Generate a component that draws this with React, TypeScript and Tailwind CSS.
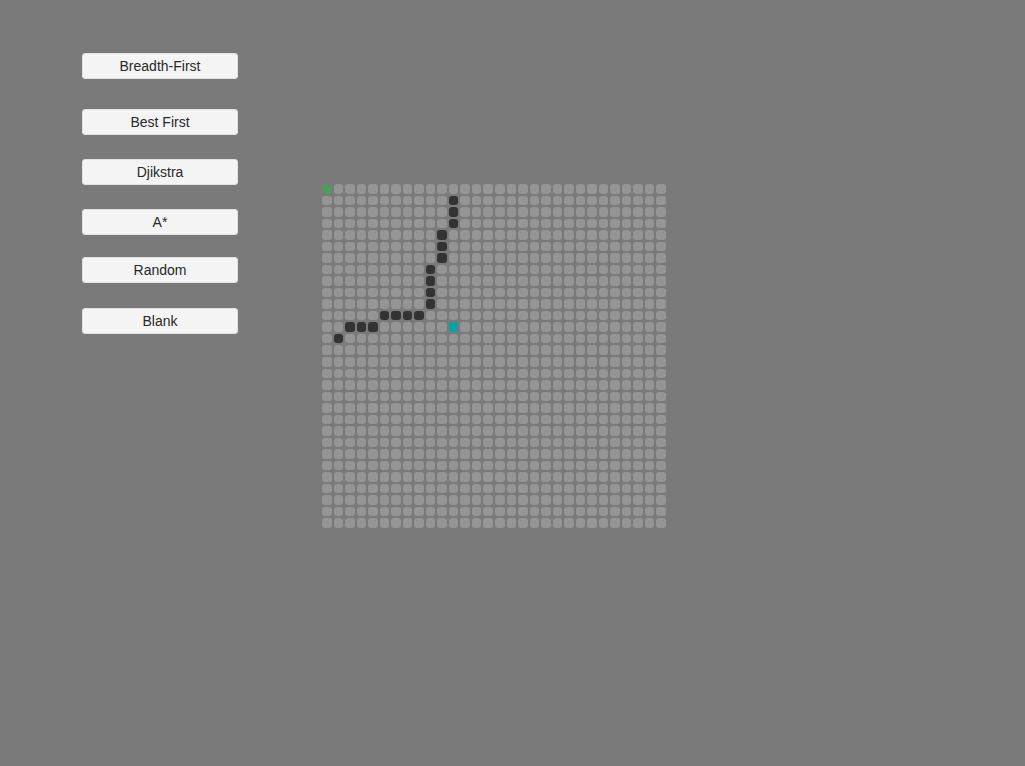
import React from "react";

const ROWS = 30;
const COLS = 30;

// walls on the grid, as "row,col"
const walls = new Set([
  "1,11", "2,11", "3,11",
  "4,10", "5,10", "6,10",
  "7,9", "8,9", "9,9", "10,9",
  "11,5", "11,6", "11,7", "11,8",
  "12,2", "12,3", "12,4",
  "13,1",
]);

const buttons = [
  { label: "Breadth-First", mt: "mt-0" },
  { label: "Best First", mt: "mt-[30px]" },
  { label: "Djikstra", mt: "mt-[24px]" },
  { label: "A*", mt: "mt-[24px]" },
  { label: "Random", mt: "mt-[22px]" },
  { label: "Blank", mt: "mt-[25px]" },
];

function cellClass(r: number, c: number) {
  if (r === 0 && c === 0) return "rounded-full bg-[#4c9f58]";
  if (r === 12 && c === 11) return "rounded-[3px] bg-[#0aa2a4]";
  if (walls.has(`${r},${c}`)) return "rounded-[3px] bg-[#333333]";
  return "rounded-[3px] bg-[#959595]";
}

export default function App() {
  const cells = [];
  for (let r = 0; r < ROWS; r++) {
    for (let c = 0; c < COLS; c++) {
      cells.push(<div key={`${r}-${c}`} className={cellClass(r, c)} />);
    }
  }

  return (
    <div
      className="w-full h-screen bg-[#7a7a7a] flex items-start overflow-hidden"
      style={{ fontFamily: '"Liberation Sans", Arial, sans-serif' }}
    >
      {/* Algorithm buttons */}
      <div className="flex flex-col ml-[82px] mt-[53px] w-[156px]">
        {buttons.map((b) => (
          <button
            key={b.label}
            className={`${b.mt} h-[26px] w-full rounded-[3px] bg-[#f4f4f4] border border-[#e2e2e2] text-[14px] text-[#282828] flex items-center justify-center`}
          >
            {b.label}
          </button>
        ))}
      </div>

      {/* Grid */}
      <div className="ml-[84px] mt-[184px] w-[344px] h-[344px] grid grid-cols-[repeat(30,1fr)] grid-rows-[repeat(30,1fr)] gap-[2px]">
        {cells}
      </div>
    </div>
  );
}
